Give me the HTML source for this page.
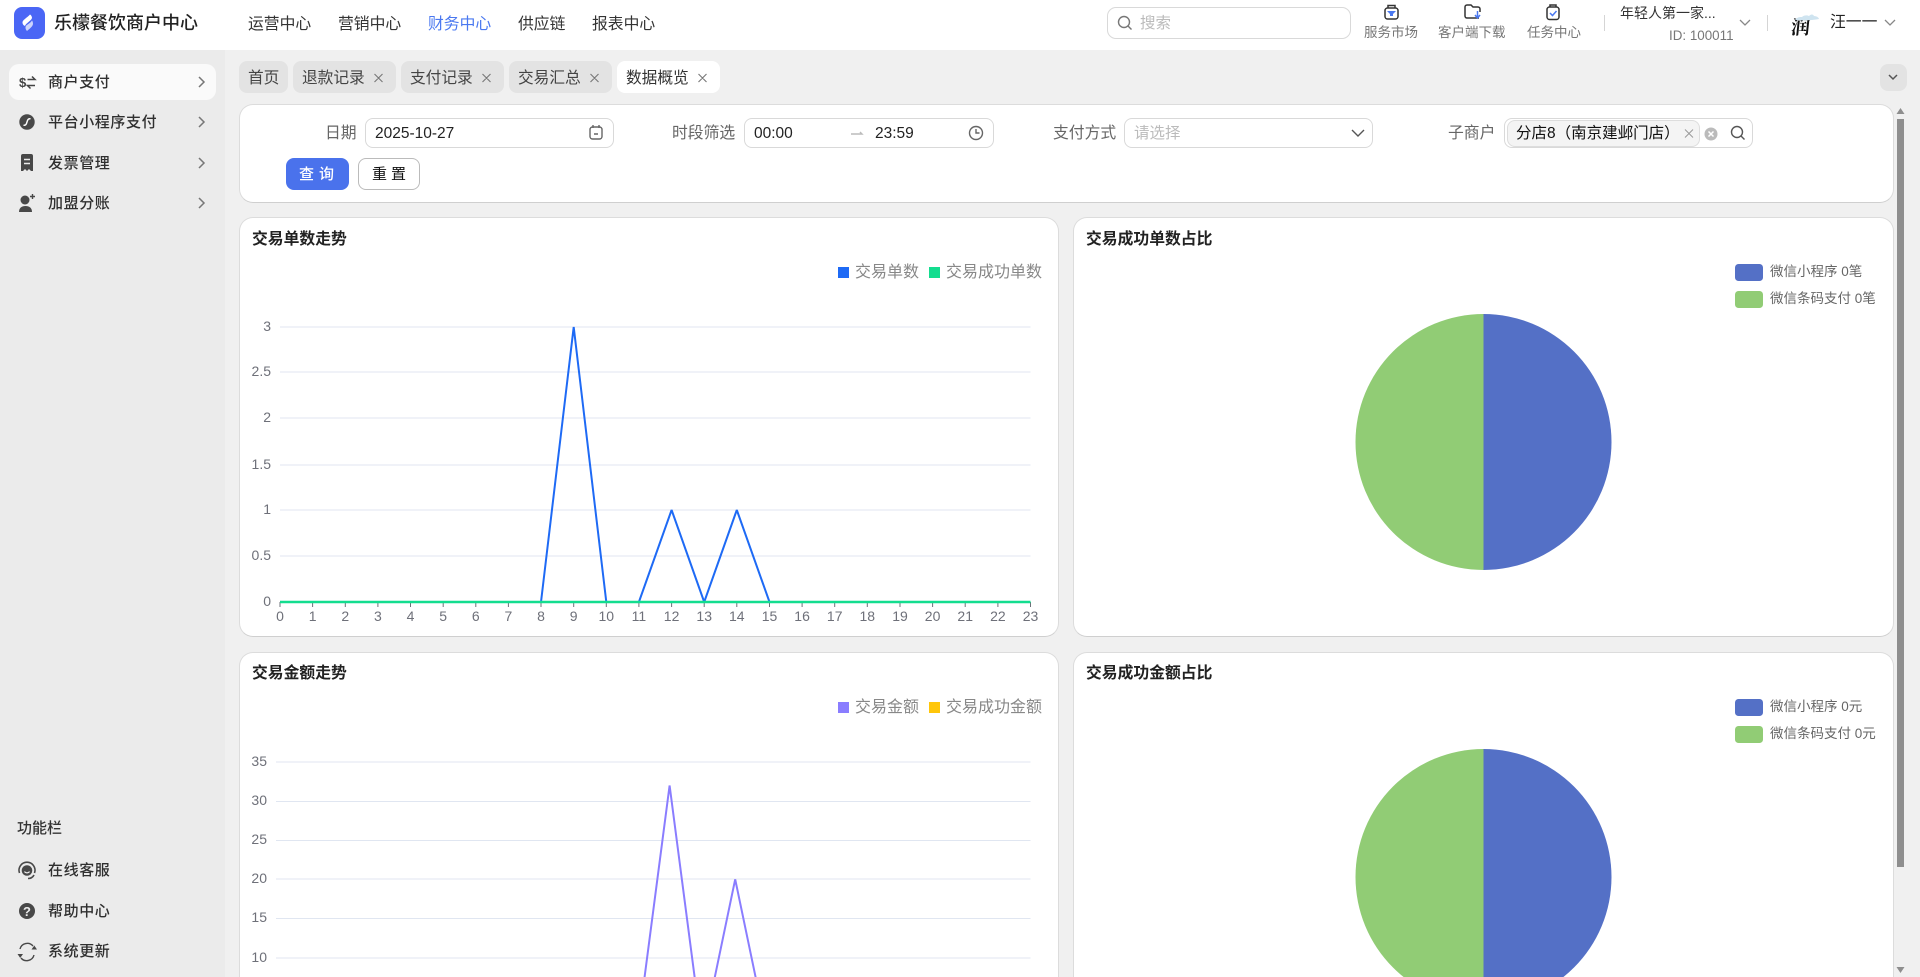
<!DOCTYPE html>
<html lang="zh-CN"><head><meta charset="utf-8"><title>数据概览</title>
<style>
*{box-sizing:border-box;margin:0;padding:0}
html,body{width:1920px;height:977px;overflow:hidden;background:#f0f0f0;font-family:"Liberation Sans","Noto Sans CJK SC",sans-serif;color:#333}
#root{position:relative;width:1920px;height:977px;overflow:hidden}
.b,.t{position:absolute}
.t{white-space:nowrap;line-height:24px;height:24px}
.nav{font-size:15.8px;color:#333;top:12.500px}
.side{font-size:15px;letter-spacing:.6px;color:#2f2f2f;left:48px;font-weight:500}
.tab{top:61px;height:32px;background:#e3e3e3;border-radius:8px}
.tabt{top:66.500px;font-size:15.7px;color:#444}
.lab{font-size:15.8px;color:#666;top:121.500px}
.field{top:118px;height:30px;background:#fff;border:1px solid #d9d9d9;border-radius:8px}
.card{background:#fff;border:1px solid #dcdcdc;border-bottom-color:#cfcfcf;border-radius:14px}
.cut{height:325px;border-bottom:0;border-radius:14px 14px 0 0}
.ct{font-size:15.800px;font-weight:700;color:#222;left:252px}
.lg{font-size:16px;color:#888}
.pl{font-size:13.5px;color:#666;left:1770px}
.top{font-size:13.5px;color:#777;top:20.500px}
svg{position:absolute;left:0;top:0}
</style></head><body><div id="root">
<div class="b" style="left:0;top:0;width:1920px;height:50px;background:#fff"></div>
<div class="b" style="left:0;top:50px;width:225px;height:927px;background:#ebebeb"></div>
<div class="b" style="left:225px;top:50px;width:1695px;height:927px;background:#f0f0f0"></div>

<div class="t" style="left:54px;top:11px;font-size:18px;font-weight:500;color:#222">乐檬餐饮商户中心</div>
<div class="t nav" style="left:248px">运营中心</div>
<div class="t nav" style="left:338px">营销中心</div>
<div class="t nav" style="left:428px;color:#4a78f0">财务中心</div>
<div class="t nav" style="left:518px">供应链</div>
<div class="t nav" style="left:592px">报表中心</div>

<div class="b" style="left:1107px;top:7px;width:244px;height:32px;border:1px solid #d9d9d9;border-radius:9px;background:#fff"></div>
<div class="t" style="left:1140px;top:11.500px;font-size:15.5px;color:#bbb">搜索</div>
<div class="t top" style="left:1364px">服务市场</div>
<div class="t top" style="left:1438px">客户端下载</div>
<div class="t top" style="left:1527px">任务中心</div>
<div class="b" style="left:1604px;top:15px;width:1px;height:16px;background:#d5d5d5"></div>
<div class="b" style="left:1767px;top:15px;width:1px;height:16px;background:#d5d5d5"></div>
<div class="t" style="left:1620px;top:1px;font-size:14px;color:#333">年轻人第一家...</div>
<div class="t" style="left:1669px;top:24px;font-size:13.400px;color:#777">ID: 100011</div>
<div class="t" style="left:1830px;top:11px;font-size:15.8px;color:#222">汪一一</div>
<div class="t" style="left:1791px;top:15px;font-size:19px;line-height:24px;color:#111;font-family:'Noto Serif CJK SC',serif;font-weight:700;transform:skewX(-6deg)">润</div>

<div class="b" style="left:9px;top:64px;width:207px;height:36px;background:#fafafa;border-radius:10px"></div>
<div class="t side" style="top:71px">商户支付</div>
<div class="t side" style="top:111px">平台小程序支付</div>
<div class="t side" style="top:152px">发票管理</div>
<div class="t side" style="top:192px">加盟分账</div>
<div class="t" style="left:17px;top:817px;font-size:15px;font-weight:500;color:#333">功能栏</div>
<div class="t side" style="top:859px">在线客服</div>
<div class="t side" style="top:900px">帮助中心</div>
<div class="t side" style="top:940px">系统更新</div>

<div class="b tab" style="left:239px;width:49px"></div>
<div class="b tab" style="left:293px;width:103px"></div>
<div class="b tab" style="left:401px;width:103px"></div>
<div class="b tab" style="left:509px;width:103px"></div>
<div class="b tab" style="left:617px;width:103px;background:#fff"></div>
<div class="b tab" style="left:1880px;width:27px;top:64px;height:27px"></div>
<div class="t tabt" style="left:248px">首页</div>
<div class="t tabt" style="left:302px">退款记录</div>
<div class="t tabt" style="left:410px">支付记录</div>
<div class="t tabt" style="left:518px">交易汇总</div>
<div class="t tabt" style="left:626px;color:#333">数据概览</div>

<div class="b card" style="left:239px;top:104px;width:1655px;height:99px"></div>
<div class="t lab" style="left:325px">日期</div>
<div class="b field" style="left:365px;width:249px"></div>
<div class="t" style="left:375px;top:121.500px;font-size:15.500px;color:#222">2025-10-27</div>
<div class="t lab" style="left:672px">时段筛选</div>
<div class="b field" style="left:744px;width:250px"></div>
<div class="t" style="left:754px;top:121.500px;font-size:15.500px;color:#222">00:00</div>
<div class="t" style="left:875px;top:121.500px;font-size:15.500px;color:#222">23:59</div>
<div class="t lab" style="left:1053px">支付方式</div>
<div class="b field" style="left:1124px;width:249px"></div>
<div class="t" style="left:1134px;top:121.500px;font-size:15.5px;color:#bbb">请选择</div>
<div class="t lab" style="left:1448px">子商户</div>
<div class="b field" style="left:1504px;width:249px"></div>
<div class="b" style="left:1507px;top:120px;width:193px;height:27px;background:#f4f4f4;border:1px solid #ddd;border-radius:8px"></div>
<div class="t" style="left:1516px;top:122px;font-size:15.500px;color:#111">分店8（南京建邺门店）</div>
<div class="b" style="left:286px;top:158px;width:63px;height:32px;background:#4a72ec;border-radius:8px"></div>
<div class="t" style="left:299px;top:162.500px;font-size:15px;letter-spacing:5px;color:#fff;font-weight:500">查询</div>
<div class="b" style="left:358px;top:158px;width:62px;height:32px;background:#fff;border:1px solid #bbb;border-radius:8px"></div>
<div class="t" style="left:372px;top:162.500px;font-size:15px;letter-spacing:4px;color:#111">重置</div>

<div class="b card" style="left:239px;top:217px;width:820px;height:420px"></div>
<div class="b card" style="left:1073px;top:217px;width:821px;height:420px"></div>
<div class="b card cut" style="left:239px;top:652px;width:820px"></div>
<div class="b card cut" style="left:1073px;top:652px;width:821px"></div>
<div class="t ct" style="top:227.500px">交易单数走势</div>
<div class="t ct" style="top:227.500px;left:1086px">交易成功单数占比</div>
<div class="t ct" style="top:661.500px">交易金额走势</div>
<div class="t ct" style="top:661.500px;left:1086px">交易成功金额占比</div>

<div class="t lg" style="left:855px;top:260.500px">交易单数</div>
<div class="t lg" style="left:946px;top:260.500px">交易成功单数</div>
<div class="t lg" style="left:855px;top:695.500px">交易金额</div>
<div class="t lg" style="left:946px;top:695.500px">交易成功金额</div>
<div class="t pl" style="top:260px">微信小程序 0笔</div>
<div class="t pl" style="top:287px">微信条码支付 0笔</div>
<div class="t pl" style="top:695px">微信小程序 0元</div>
<div class="t pl" style="top:722px">微信条码支付 0元</div>

<svg width="1920" height="977" viewBox="0 0 1920 977" xmlns="http://www.w3.org/2000/svg">
<!-- logo -->
<rect x="14" y="7" width="31" height="32" rx="8" fill="#4a66f5"/>
<path d="M30 14.500C27 18 22 20 22.500 23C23 25 24 25.500 25 26C26 23 31 21 32 18C32 16.500 31 15 30 14.500z" fill="#fff"/>
<path d="M32 20.500C30 24 26 24.500 25.500 27C25.300 28.500 26 30 27 31C29 29 32.500 27 33 24C33 22.500 32.500 21 32 20.500z" fill="#fff" opacity=".72"/>
<!-- search -->
<g fill="none" stroke="#777" stroke-width="1.4"><circle cx="1124" cy="22" r="5.5"/><path d="M1128 26l3.500 3.500"/></g>
<!-- top icons -->
<g fill="none" stroke="#333" stroke-width="1.5">
<rect x="1385" y="8" width="13" height="11" rx="2.500"/><path d="M1388 8V5.500h7V8"/>
<path d="M1479 18h-12a2 2 0 0 1-2-2V7a2 2 0 0 1 2-2h4l2 2h5a2 2 0 0 1 2 2v3"/>
<rect x="1547" y="7" width="12" height="12.500" rx="2.500"/><path d="M1550 7V5h6v2"/>
</g>
<path d="M1387 11h9l-3 3v2h-3v-2z" fill="#4a78f0"/>
<path d="M1477.500 11v6M1475 15l2.500 3 2.500-3" fill="none" stroke="#4a78f0" stroke-width="1.500"/>
<path d="M1550 13l2.500 2.500 4-4.500" fill="none" stroke="#4a78f0" stroke-width="1.500"/>
<!-- chevrons header -->
<path d="M1740 20l5 5 5-5M1885 20l5 5 5-5" fill="none" stroke="#888" stroke-width="1.300"/>
<!-- avatar cloud -->
<path d="M1795 20c2-3 5-3 7-3 2-2 5-2 7-1 2-2 4-2 5 0 3 0 5 2 5 3-5 1-16 2-24 1z" fill="#cfe4f0"/>
<!-- sidebar icons -->
<text x="19" y="87" font-size="13" font-weight="700" fill="#444" font-family="Liberation Sans">$</text>
<path d="M27.500 79.500h7.500l-3-3M35 85.500h-7.500l3 3" fill="none" stroke="#444" stroke-width="1.500"/>
<circle cx="27" cy="122" r="7.700" fill="#484848"/>
<path d="M23.500 125c2 1 3-1 3.500-3s1.500-4 3.500-3" fill="none" stroke="#fff" stroke-width="1.500"/>
<path d="M21 156a2 2 0 0 1 2-2h8a2 2 0 0 1 2 2v15l-2 0-2-2-2 2-2-2-2 2-2 0z" fill="#484848"/>
<path d="M24 159.500h6M24 163.500h6" stroke="#ebebeb" stroke-width="1.500"/>
<circle cx="25" cy="200" r="4.500" fill="#484848"/>
<path d="M19 212c0-4 2.500-6 6.500-6s6.500 2 6.500 6z" fill="#484848"/>
<path d="M30 196.500h5M32.500 194v5" stroke="#484848" stroke-width="1.400"/>
<path d="M199 77l5 5-5 5M199 117l5 5-5 5M199 158l5 5-5 5M199 198l5 5-5 5" fill="none" stroke="#777" stroke-width="1.500"/>
<!-- bottom icons -->
<g fill="none" stroke="#484848" stroke-width="1.600">
<path d="M19.500 873a8 8 0 1 1 15 0"/><path d="M34 875c-1 2-3 3.500-6 3.500"/>
</g>
<circle cx="27" cy="870.500" r="5.300" fill="#484848"/>
<path d="M24.500 871.500c1 1.800 4 1.800 5 0" fill="none" stroke="#ebebeb" stroke-width="1.200"/>
<circle cx="27" cy="911" r="8" fill="#484848"/>
<text x="27" y="916" font-size="13" font-weight="700" text-anchor="middle" fill="#ebebeb" font-family="Liberation Sans">?</text>
<path d="M20 949a7.500 7.500 0 0 1 13-3M34 955a7.500 7.500 0 0 1-13 3" fill="none" stroke="#484848" stroke-width="1.400"/>
<path d="M31.500 949.500h5.500l-2.700-4zM17.500 954h5.500l-2.800 4z" fill="#484848"/>
<!-- tab x -->
<path d="M374.500 74l8 8M382.500 74l-8 8M482.500 74l8 8M490.500 74l-8 8M590.500 74l8 8M598.500 74l-8 8M698.500 74l8 8M706.500 74l-8 8" fill="none" stroke="#777" stroke-width="1.100"/>
<path d="M1889 75l4 4 4-4" fill="none" stroke="#555" stroke-width="1.500"/>
<!-- field icons -->
<g fill="none" stroke="#666" stroke-width="1.400">
<rect x="590" y="127" width="12" height="12" rx="2.500"/><path d="M593 125v3M599 125v3M594 134h4"/>
<circle cx="976" cy="133" r="6.500"/><path d="M976 129v4h3.500"/>
<path d="M851 134h11l-2-2" stroke="#bbb"/>
<path d="M1352 130l6 6 6-6" stroke="#555"/>
<circle cx="1737" cy="132" r="5.500" stroke="#555"/><path d="M1741 136l3.500 3.500" stroke="#555"/>
<path d="M1685 129.500l8 8M1693 129.500l-8 8" stroke="#999" stroke-width="1"/>
</g>
<circle cx="1711" cy="134" r="6.500" fill="#bbb"/>
<path d="M1708.500 131.500l5 5M1713.500 131.500l-5 5" stroke="#fff" stroke-width="1.500"/>
<!-- scrollbar -->
<rect x="1897" y="119" width="7" height="748" fill="#8e8e8e"/>
<path d="M1900.500 108l4 6h-8z" fill="#8e8e8e"/>
<path d="M1900.500 973l4-6h-8z" fill="#8e8e8e"/>

<!-- chart 1 -->
<path d="M280 327H1030.500M280 372H1030.500M280 418H1030.500M280 465H1030.500M280 510H1030.500M280 556H1030.500" stroke="#e0e6f1" stroke-width="1"/>
<g font-family="Liberation Sans" font-size="14" fill="#6e7079" text-anchor="end">
<text x="271" y="331">3</text><text x="271" y="376">2.5</text><text x="271" y="422">2</text><text x="271" y="469">1.5</text><text x="271" y="514">1</text><text x="271" y="560">0.5</text><text x="271" y="606">0</text>
</g>
<path d="M280 602v5M312.600 602v5M345.300 602v5M377.900 602v5M410.500 602v5M443.200 602v5M475.800 602v5M508.400 602v5M541 602v5M573.700 602v5M606.300 602v5M638.900 602v5M671.600 602v5M704.200 602v5M736.800 602v5M769.500 602v5M802.100 602v5M834.700 602v5M867.300 602v5M900 602v5M932.600 602v5M965.200 602v5M997.900 602v5M1030.500 602v5" stroke="#6e7079" fill="none"/>
<g font-family="Liberation Sans" font-size="14" fill="#6e7079" text-anchor="middle">
<text x="280" y="621">0</text><text x="312.600" y="621">1</text><text x="345.300" y="621">2</text><text x="377.900" y="621">3</text><text x="410.500" y="621">4</text><text x="443.200" y="621">5</text><text x="475.800" y="621">6</text><text x="508.400" y="621">7</text><text x="541" y="621">8</text><text x="573.700" y="621">9</text><text x="606.300" y="621">10</text><text x="638.900" y="621">11</text><text x="671.600" y="621">12</text><text x="704.200" y="621">13</text><text x="736.800" y="621">14</text><text x="769.500" y="621">15</text><text x="802.100" y="621">16</text><text x="834.700" y="621">17</text><text x="867.300" y="621">18</text><text x="900" y="621">19</text><text x="932.600" y="621">20</text><text x="965.200" y="621">21</text><text x="997.900" y="621">22</text><text x="1030.500" y="621">23</text>
</g>
<path d="M280 602H541L573.700 327L606.300 602H638.900L671.600 510L704.200 602L736.800 510L769.500 602H1030.500" fill="none" stroke="#1e6af5" stroke-width="2" stroke-linejoin="bevel"/>
<path d="M280 602H1030.500" stroke="#13dd8f" stroke-width="2.500"/>
<rect x="838" y="267" width="11" height="11" fill="#1e6af5"/>
<rect x="929" y="267" width="11" height="11" fill="#13dd8f"/>

<!-- chart 2 -->
<path d="M276 762H1030.500M276 879H1030.500M276 958H1030.500" stroke="#e0e6f1"/>
<path d="M276 801.500H1030.500M276 840.500H1030.500M276 918.500H1030.500" stroke="#e0e6f1"/>
<g font-family="Liberation Sans" font-size="14" fill="#6e7079" text-anchor="end">
<text x="267" y="766">35</text><text x="267" y="805">30</text><text x="267" y="844">25</text><text x="267" y="883">20</text><text x="267" y="922">15</text><text x="267" y="962">10</text>
</g>
<path d="M636.800 1036.600L669.600 785.500L702.400 1036.600L735.200 879.300L768 1036.600" fill="none" stroke="#8a7dff" stroke-width="2" stroke-linejoin="bevel"/>
<rect x="838" y="702" width="11" height="11" fill="#8a7dff"/>
<rect x="929" y="702" width="11" height="11" fill="#ffc60a"/>

<!-- pies -->
<path d="M1483.500 314a128 128 0 0 1 0 256z" fill="#5470c6"/>
<path d="M1483.500 570a128 128 0 0 1 0-256z" fill="#91cc75"/>
<path d="M1483.500 749a128 128 0 0 1 0 256z" fill="#5470c6"/>
<path d="M1483.500 1005a128 128 0 0 1 0-256z" fill="#91cc75"/>
<rect x="1735" y="264" width="28" height="17" rx="3.500" fill="#5470c6"/>
<rect x="1735" y="291" width="28" height="17" rx="3.500" fill="#91cc75"/>
<rect x="1735" y="699" width="28" height="17" rx="3.500" fill="#5470c6"/>
<rect x="1735" y="726" width="28" height="17" rx="3.500" fill="#91cc75"/>
</svg>
</div></body></html>
